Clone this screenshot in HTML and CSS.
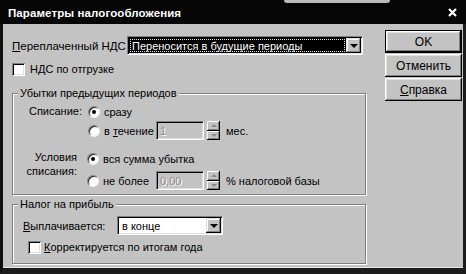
FILE: index.html
```html
<!DOCTYPE html>
<html lang="ru">
<head>
    <meta charset="UTF-8">
    <title>Параметры налогообложения</title>
    <link rel="stylesheet" href="styles.css">
</head>
<body>
    <div class="window">
        <div class="titlebar">
            <span class="title">Параметры налогообложения</span>
            <svg class="close" width="9" height="9" viewBox="0 0 9 9">
                <path d="M1 1 L8 8 M8 1 L1 8" stroke="#fff" stroke-width="2.2"/>
            </svg>
            <span class="scan-mark"></span>
        </div>

        <div class="content">
            <div class="main">
                <div class="vat-row">
                    <span class="vat-label"><u>П</u>ереплаченный НДС</span>
                    <div class="combo wide">
                        <span class="value selected"><span class="focus">Переносится в будущие периоды</span></span>
                        <span class="arrow"></span>
                    </div>
                </div>

                <label class="check-row top-check">
                    <span class="box"></span>НДС по отгрузке
                </label>

                <fieldset class="group losses">
                    <legend>Убытки предыдущих периодов</legend>

                    <div class="opt-block first">
                        <div class="opt-label">Списание:</div>
                        <div class="opt-list">
                            <div class="opt"><span class="radio checked"></span>сразу</div>
                            <div class="opt">
                                <span class="radio"></span>
                                <span class="opt-text">в <u>т</u>ечение</span>
                                <span class="field">1</span>
                                <span class="spin"><i class="up"></i><i class="down"></i></span>
                                <span class="unit">мес.</span>
                            </div>
                        </div>
                    </div>

                    <div class="opt-block second">
                        <div class="opt-label">Условия<br>списания:</div>
                        <div class="opt-list">
                            <div class="opt"><span class="radio checked"></span>вся сумма убытка</div>
                            <div class="opt">
                                <span class="radio"></span>
                                <span class="opt-text">не более</span>
                                <span class="field">0,00</span>
                                <span class="spin"><i class="up"></i><i class="down"></i></span>
                                <span class="unit">% налоговой базы</span>
                            </div>
                        </div>
                    </div>
                </fieldset>

                <fieldset class="group profit">
                    <legend>Налог на прибыль</legend>
                    <div class="pay-row">
                        <span class="pay-label"><u>В</u>ыплачивается:</span>
                        <div class="combo short">
                            <span class="value">в конце</span>
                            <span class="arrow"></span>
                        </div>
                    </div>
                    <label class="check-row year-check">
                        <span class="box"></span><u>К</u>орректируется по итогам года
                    </label>
                </fieldset>
            </div>

            <div class="buttons">
                <button class="btn default">OK</button>
                <button class="btn">Отменить</button>
                <button class="btn"><u>С</u>правка</button>
            </div>
        </div>
    </div>
</body>
</html>
```

FILE: styles.css
```css
/* General */
body {
    margin: 0;
    background: #c3c3c3;
    font-family: "Liberation Sans", Arial, sans-serif;
    font-size: 11px;
    color: #000;
}

u {
    text-decoration: underline;
    text-underline-offset: 1px;
}

.window {
    width: 466px;
    height: 274px;
    display: flex;
    flex-direction: column;
    background: #c3c3c3;
}

/* Title bar */
.titlebar {
    position: relative;
    height: 24px;
    flex: none;
    display: flex;
    align-items: center;
    justify-content: space-between;
    padding: 0 9px 0 8px;
    background: #050505;
    color: #fff;
}
.title {
    font-weight: bold;
    font-size: 11.5px;
    letter-spacing: 0.1px;
    padding-top: 2px;
}
.close {
    margin-top: 1px;
}
.scan-mark {
    position: absolute;
    left: 284px;
    top: 0;
    width: 106px;
    height: 3px;
    background: #b8b8b8;
    border-radius: 0 0 10px 10px;
}

/* Body */
.content {
    flex: 1;
    display: flex;
    padding: 6px 0 0 9px;
    border-left: 3px solid #111;
    border-right: 3px solid #1c1c1c;
    border-bottom: 6px solid #1c1c1c;
    box-shadow: inset 0 -1px #e6e6e6;
}
.main {
    width: 354px;
    margin-top: 6px;
}

/* Sunken / raised helpers */
.combo,
.field {
    box-sizing: border-box;
    border: 1px solid;
    border-color: #808080 #fff #fff #808080;
    box-shadow: inset 1px 1px #000, inset -1px -1px #dfdfdf;
}

/* Top combo row */
.vat-row {
    display: flex;
    align-items: center;
    height: 19px;
}
.vat-label {
    width: 115px;
    font-size: 11.5px;
}
.combo {
    display: flex;
    height: 19px;
    background: #fff;
    padding: 1px;
}
.combo.wide {
    width: 236px;
}
.combo.short {
    width: 106px;
}
.combo .value {
    flex: 1;
    display: flex;
    align-items: center;
    padding-left: 3px;
}
.combo .value.selected {
    background: #000;
    color: #fff;
    padding: 1px;
}
.combo .value .focus {
    flex: 1;
    height: 100%;
    display: flex;
    align-items: center;
    padding-left: 2px;
    box-sizing: border-box;
    outline: 1px dotted #ddd;
    outline-offset: -1px;
}
.combo .arrow {
    width: 15px;
    background: #c3c3c3;
    box-shadow: inset -1px -1px #000, inset 1px 1px #dfdfdf, inset -2px -2px #808080, inset 2px 2px #fff;
    display: flex;
    align-items: center;
    justify-content: center;
}
.combo .arrow::after {
    content: "";
    border-left: 4px solid transparent;
    border-right: 4px solid transparent;
    border-top: 4px solid #000;
    margin-top: 1px;
}

/* Check boxes */
.check-row {
    display: flex;
    align-items: center;
    height: 14px;
}
.box {
    width: 13px;
    height: 13px;
    box-sizing: border-box;
    background: #fff;
    box-shadow: inset 1px 1px #808080, inset -1px -1px #fff, inset 2px 2px #000, inset -2px -2px #dfdfdf;
    margin-right: 5px;
    flex: none;
}
.top-check {
    margin-top: 7px;
}
.year-check {
    margin: 5px 0 0 15px;
}
.year-check .box {
    margin-right: 3px;
}

/* Groups */
.group {
    margin: 10px 0 0;
    padding: 2px 0 4px;
    border: 1px solid #808080;
    box-shadow: inset 1px 1px #fff, 1px 1px #fff;
}
.group legend {
    padding: 0 2px;
    margin-left: 5px;
    line-height: 14px;
    background: #c3c3c3;
}
.group.profit {
    margin-top: 2px;
    padding: 5px 0 9px;
}

/* Option blocks */
.opt-block {
    display: flex;
}
.opt-label {
    text-align: right;
    flex: none;
}
.first .opt-label {
    width: 69px;
    line-height: 19px;
    margin-right: 6px;
}
.second {
    margin-top: 9px;
}
.second .opt-label {
    width: 64px;
    line-height: 14px;
    padding-top: 1px;
    margin-right: 10px;
}
.second .opt .radio {
    margin-right: 4px;
}
.second .opt + .opt {
    margin-top: 3px;
}
.opt {
    display: flex;
    align-items: center;
    height: 19px;
}
.radio {
    position: relative;
    width: 12px;
    height: 12px;
    box-sizing: border-box;
    border-radius: 50%;
    background: #fff;
    border: 1px solid;
    border-color: #808080 #eee #eee #808080;
    box-shadow: inset 1px 1px #222;
    margin-right: 4px;
    flex: none;
}
.radio.checked::after {
    content: "";
    position: absolute;
    left: 3px;
    top: 3px;
    width: 4px;
    height: 4px;
    border-radius: 50%;
    background: #000;
}
.opt-text {
    width: 52px;
}
.second .opt-text {
    width: 53px;
}
.field {
    width: 48px;
    height: 19px;
    display: flex;
    align-items: center;
    padding-left: 3px;
    background: #c3c3c3;
    color: #8a8a8a;
    text-shadow: 1px 1px #fff;
}
.spin {
    width: 13px;
    height: 19px;
    margin: 0 6px 0 3px;
    display: flex;
    flex-direction: column;
}
.spin i {
    flex: 1;
    background: #c3c3c3;
    box-shadow: inset -1px -1px #000, inset 1px 1px #fff, inset -2px -2px #808080;
    display: flex;
    align-items: center;
    justify-content: center;
}
.spin i::after {
    content: "";
    border-left: 3px solid transparent;
    border-right: 3px solid transparent;
}
.spin .up::after {
    border-bottom: 3px solid #8a8a8a;
}
.spin .down::after {
    border-top: 3px solid #8a8a8a;
}

/* Profit group */
.pay-row {
    display: flex;
    align-items: center;
    padding-left: 10px;
}
.pay-label {
    width: 94px;
}

/* Buttons */
.buttons {
    width: 77px;
    margin-left: 19px;
    display: flex;
    flex-direction: column;
    gap: 1px;
}
.btn {
    height: 23px;
    padding: 0;
    border: none;
    background: #c3c3c3;
    font-family: "Liberation Sans", Arial, sans-serif;
    font-size: 12px;
    color: #000;
    box-shadow: inset -1px -1px #000, inset 1px 1px #fff, inset -2px -2px #808080, inset 2px 2px #dfdfdf;
}
.btn.default {
    border: 1px solid #000;
}
```
